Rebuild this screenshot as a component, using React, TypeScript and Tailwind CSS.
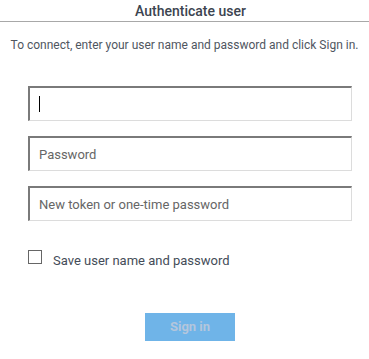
import { useState } from "react";

const inputCls =
  "block w-[324px] h-[35px] px-[9px] text-[13px] text-[#333] placeholder:text-[#666] bg-white outline-none border-t-2 border-l-2 border-r border-b border-t-[#7a7a7a] border-l-[#7a7a7a] border-r-[#dcdcdc] border-b-[#dcdcdc]";

const App = () => {
  const [save, setSave] = useState(false);
  return (
    <div className="w-[369px] h-[359px] bg-white font-['Roboto',sans-serif] flex flex-col">
      <div className="h-[22px] border-b border-[#a8a8a8] flex items-center justify-center pl-[12px]">
        <span className="text-[14px] font-medium text-[#3c4450] leading-none">Authenticate user</span>
      </div>
      <p className="mt-[15px] text-center text-[12px] text-[#50565f] leading-[16px]">
        To connect, enter your user name and password and click Sign in.
      </p>
      <div className="flex flex-col gap-[15px] pl-[28px] mt-[33px]">
        <div className="relative w-[324px]">
          <input className={inputCls} type="text" />
          <span className="absolute left-[11px] top-[10px] w-px h-[16px] bg-black" />
        </div>
        <input className={inputCls} type="password" placeholder="Password" />
        <input className={inputCls} type="text" placeholder="New token or one-time password" />
      </div>
      <label className="flex items-start ml-[28px] mt-[29px] gap-[11px]">
        <span
          onClick={() => setSave(!save)}
          className="w-[14px] h-[14px] border border-[#666] bg-white flex items-center justify-center"
        >
          {save ? <span className="w-[8px] h-[8px] bg-[#555]" /> : null}
        </span>
        <span className="text-[13px] text-[#444c58] leading-[16px] mt-[3px]">Save user name and password</span>
      </label>
      <div className="flex justify-center mt-[44px] pl-[11px]">
        <button className="w-[90px] h-[28px] bg-[#6fb4e8] text-[13px] font-bold text-[#b4c6dc]">Sign in</button>
      </div>
    </div>
  );
};

export default App;
